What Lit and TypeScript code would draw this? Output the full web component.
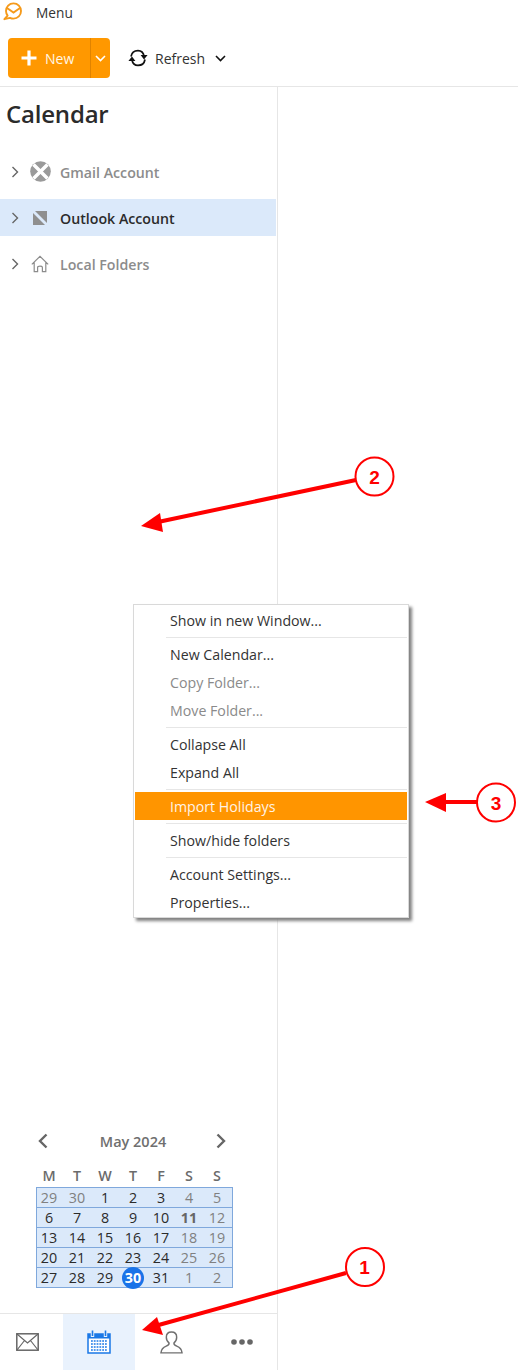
import { LitElement, html, css, svg } from "lit";
import { customElement } from "lit/decorators.js";

const chevronRight = svg`<svg class="chev" width="8" height="12" viewBox="0 0 8 12"><path d="M1.5 1 L6.5 6 L1.5 11" fill="none" stroke="#666" stroke-width="1.4"/></svg>`;

const weeks: [string, boolean?, boolean?][][] = [
  [["29", true], ["30", true], ["1"], ["2"], ["3"], ["4", true], ["5", true]],
  [["6"], ["7"], ["8"], ["9"], ["10"], ["11", true, true], ["12", true]],
  [["13"], ["14"], ["15"], ["16"], ["17"], ["18", true], ["19", true]],
  [["20"], ["21"], ["22"], ["23"], ["24"], ["25", true], ["26", true]],
  [["27"], ["28"], ["29"], ["30"], ["31"], ["1", true], ["2", true]],
];

const menu: (string | null | { t: string; cls: string })[] = [
  "Show in new Window...",
  null,
  "New Calendar...",
  { t: "Copy Folder...", cls: "off" },
  { t: "Move Folder...", cls: "off" },
  null,
  "Collapse All",
  "Expand All",
  null,
  { t: "Import Holidays", cls: "hot" },
  null,
  "Show/hide folders",
  null,
  "Account Settings...",
  "Properties...",
];

@customElement("app-root")
export class AppRoot extends LitElement {
  static styles = css`
    :host {
      display: block;
      position: relative;
      width: 518px;
      height: 1370px;
      overflow: hidden;
      background: #fff;
      font-family: "Open Sans", "Liberation Sans", sans-serif;
      font-size: 14px;
      color: #222;
    }
    .page { display: flex; flex-direction: column; height: 1370px; }
    .menubar { display: flex; align-items: center; height: 24px; padding-left: 3px; }
    .menubar span { margin-left: 11px; font-size: 13.7px; color: #333; }
    .toolbar {
      display: flex; align-items: flex-start; padding: 14px 0 0 8px; box-sizing: border-box;
      height: 63px; border-bottom: 1px solid #e6e6e6;
    }
    .new {
      display: flex; width: 102px; height: 40px; border-radius: 4px; background: #ff9800; color: #fff;
      overflow: hidden;
    }
    .new-main { width: 82px; display: flex; align-items: center; padding-left: 13px; box-sizing: border-box; gap: 8px; font-size: 14px; color: #fff6e6; }
    .new-drop { flex: 1; border-left: 1px solid #e08300; display: flex; align-items: center; justify-content: center; }
    .refresh { display: flex; align-items: center; height: 40px; margin-left: 18px; font-size: 14px; color: #333; }
    .refresh .label { margin: 0 10px 0 7px; }
    .body { flex: 1; display: flex; min-height: 0; }
    .side {
      width: 278px; box-sizing: border-box; border-right: 1px solid #e6e6e6;
      display: flex; flex-direction: column;
    }
    h1 { margin: 0; padding: 9px 0 0 6px; height: 56px; box-sizing: border-box; font-size: 24px; line-height: 36px; font-weight: 600; color: #2b2b2b; letter-spacing: -0.2px; }
    .tree { display: flex; flex-direction: column; gap: 9px; padding-top: 10px; }
    .row {
      display: flex; align-items: center; height: 37px; width: 276px; padding-left: 11px; box-sizing: border-box;
      font-weight: 600; font-size: 14.2px; color: #8c8c8c;
    }
    .row .name { padding-top: 2px; }
    .row.sel { background: #dbe9fa; color: #2b2b2b; }
    .row .ic { width: 22px; height: 22px; margin-left: 10px; margin-right: 9px; display: flex; align-items: center; justify-content: center; }
    .spacer { flex: 1; }
    .cal { padding-left: 36px; width: 197px; box-sizing: content-box; margin-bottom: 25px; }
    .cal-head { display: flex; align-items: center; justify-content: space-between; height: 24px; padding: 0 7px 0 1px; width: 190px; box-sizing: content-box; }
    .cal-head span { font-weight: 600; font-size: 14.5px; color: #6f6f6f; margin-left: 2px; }
    .wd, .wk { display: grid; grid-template-columns: repeat(7, 24px); column-gap: 4px; padding-left: 1px; text-align: center; }
    .wd { margin-top: 12px; height: 22px; line-height: 22px; font-weight: 600; font-size: 14.3px; color: #6b6b6b; }
    .grid { border: 1px solid #7fa8dc; background: #dbe9fa; width: 197px; box-sizing: border-box; }
    .wk { height: 20px; line-height: 19px; box-sizing: border-box; border-bottom: 1px solid #7fa8dc; padding-left: 0; font-size: 14.3px; color: #2b2b2b; }
    .wk:last-child { border-bottom: 0; height: 19px; }
    .wk .m { color: #808080; }
    .wk .b { font-weight: 700; color: #666; }
    .wk .today { position: relative; z-index: 1; font-weight: 700; color: #fff; }
    .wk .today::before {
      content: ""; position: absolute; z-index: -1; left: 1px; top: -1px; width: 22px; height: 22px; border-radius: 50%; background: #1a73e8;
    }
    .tabs { display: grid; grid-template-columns: 54px 72px 72px 1fr; padding-left: 9px; height: 57px; border-top: 1px solid #e6e6e6; box-sizing: border-box; }
    .tab { display: flex; align-items: center; justify-content: center; }
    .tab.first { padding-right: 18px; }
    .tab.on { background: #e9f2fd; }
    .ctx {
      position: absolute; left: 133px; top: 604px; width: 276px; height: 314px; box-sizing: border-box;
      background: #fff; border: 1px solid #d9d9d9; box-shadow: 3px 3px 3px #808080; padding: 1px;
    }
    .ctx .it { height: 28px; line-height: 29px; padding-left: 35px; font-size: 14.2px; color: #333; }
    .ctx .off { color: #8a8a8a; }
    .ctx .hot { background: #ff9500; color: #fff3e6; }
    .ctx .sep { height: 1px; margin: 3px 0 2px 31px; background: #e6e6e6; }
    .notes { position: absolute; left: 0; top: 0; pointer-events: none; }
    .notes text { font-family: "Liberation Sans", sans-serif; font-weight: 700; font-size: 19px; fill: #f00; text-anchor: middle; }
  `;

  render() {
    return html`
      <div class="page">
        <div class="menubar">
          <svg width="22" height="22" viewBox="0 0 22 22">
            <path d="M4.6 14.6 C3.6 13.2 3 11.8 3 10 C3 5.6 6.2 2.4 10.5 2.4 C14.8 2.4 18 5.6 18 10 C18 14.4 14.8 17.6 10.5 17.6 C9.2 17.6 8 17.3 7 16.8 L1.4 18.2 Z" fill="none" stroke="#f59a1b" stroke-width="1.9" stroke-linejoin="round"/>
            <path d="M4 7 L10.5 11.5 L17 7" fill="none" stroke="#f59a1b" stroke-width="1.9"/>
          </svg>
          <span>Menu</span>
        </div>
        <div class="toolbar">
          <div class="new">
            <div class="new-main">
              <svg width="16" height="16" viewBox="0 0 16 16"><path d="M8 0.5 V15.5 M0.5 8 H15.5" stroke="#fff" stroke-width="3.2"/></svg>
              New
            </div>
            <div class="new-drop">
              <svg width="11" height="7" viewBox="0 0 11 7"><path d="M1 1 L5.5 5.5 L10 1" fill="none" stroke="#fff" stroke-width="1.6"/></svg>
            </div>
          </div>
          <div class="refresh">
            <svg width="20" height="18" viewBox="0 0 20 18">
              <path d="M3 7.5 C3.6 4 6.4 1.6 10 1.6 C13 1.6 15.4 3.6 16 7" fill="none" stroke="#111" stroke-width="1.7"/>
              <path d="M17 10.5 C16.4 14 13.6 16.4 10 16.4 C7 16.4 4.6 14.4 4 11" fill="none" stroke="#111" stroke-width="1.7"/>
              <path d="M12.6 6 H19.6 L16 10.6 Z M0.4 12 H7.4 L4 7.4 Z" fill="#111"/>
            </svg>
            <span class="label">Refresh</span>
            <svg width="11" height="7" viewBox="0 0 11 7"><path d="M1 1 L5.5 5.5 L10 1" fill="none" stroke="#111" stroke-width="1.6"/></svg>
          </div>
        </div>
        <div class="body">
          <div class="side">
            <h1>Calendar</h1>
            <div class="tree">
              <div class="row">
                ${chevronRight}
                <div class="ic">
                  <svg width="21" height="21" viewBox="0 0 21 21">
                    <circle cx="10.5" cy="10.5" r="10.3" fill="#9a9a9a"/>
                    <path d="M3.5 3.5 L17.5 17.5 M17.5 3.5 L3.5 17.5" stroke="#fff" stroke-width="3.4"/>
                  </svg>
                </div>
                <span class="name">Gmail Account</span>
              </div>
              <div class="row sel">
                ${chevronRight}
                <div class="ic">
                  <svg width="14" height="14" viewBox="0 0 14 14">
                    <rect width="14" height="14" fill="#8f8f8f"/>
                    <path d="M0 0 L14 14" stroke="#dbe9fa" stroke-width="2.8"/>
                  </svg>
                </div>
                <span class="name">Outlook Account</span>
              </div>
              <div class="row">
                ${chevronRight}
                <div class="ic">
                  <svg width="18" height="18" viewBox="0 0 18 18">
                    <path d="M0.8 9.4 L9 1.4 L17.2 9.4 M3.2 7.5 V16.6 H6.6 V12.4 C6.6 10.6 11.4 10.6 11.4 12.4 V16.6 H14.8 V7.5" fill="none" stroke="#8c8c8c" stroke-width="1.2"/>
                  </svg>
                </div>
                <span class="name">Local Folders</span>
              </div>
            </div>
            <div class="spacer"></div>
            <div class="cal">
              <div class="cal-head">
                <svg width="12" height="16" viewBox="0 0 12 16"><path d="M9.5 1.5 L3 8 L9.5 14.5" fill="none" stroke="#666" stroke-width="2.4"/></svg>
                <span>May 2024</span>
                <svg width="12" height="16" viewBox="0 0 12 16"><path d="M2.5 1.5 L9 8 L2.5 14.5" fill="none" stroke="#666" stroke-width="2.4"/></svg>
              </div>
              <div class="wd">${["M", "T", "W", "T", "F", "S", "S"].map((d) => html`<span>${d}</span>`)}</div>
              <div class="grid">
                ${weeks.map(
                  (w, i) => html`<div class="wk">
                    ${w.map(
                      ([d, m, b], j) =>
                        html`<span class="${i === 4 && j === 3 ? "today" : b ? "b" : m ? "m" : ""}">${d}</span>`
                    )}
                  </div>`
                )}
              </div>
            </div>
            <div class="tabs">
              <div class="tab first">
                <svg width="23" height="18" viewBox="0 0 23 18">
                  <rect x="0.8" y="0.8" width="21.4" height="16.4" fill="none" stroke="#666" stroke-width="1.5"/>
                  <path d="M1 1 L11.5 10 L22 1 M1 17 L8.5 7.5 M22 17 L14.5 7.5" fill="none" stroke="#666" stroke-width="1.2"/>
                </svg>
              </div>
              <div class="tab on">
                <svg width="24" height="24" viewBox="0 0 24 24">
                  <path d="M1 4 H23 V23 H1 Z" fill="#fff" stroke="#1a78e6" stroke-width="1.5"/>
                  <rect x="1" y="4" width="22" height="4.500" fill="#1a78e6"/>
                  <path d="M5.5 1 V7 M18.500 1 V7" stroke="#e9f2fd" stroke-width="3.4"/>
                  <path d="M5.5 0.5 V6 M18.5 0.5 V6" stroke="#1a78e6" stroke-width="1.6"/>
                  <path d="M4 11 H20 M4 14 H20 M4 17 H20 M4 20 H20" stroke="#1a78e6" stroke-width="1.6" stroke-dasharray="1.8 1"/>
                </svg>
              </div>
              <div class="tab">
                <svg width="23" height="23" viewBox="0 0 24 24">
                  <path d="M6.6 6.5 C6.6 3 9 1 12 1 C15 1 17.4 3 17.4 6.5 C17.4 9.2 16 11.4 14.6 12.4 C14.2 13.8 15 14.800 17.500 15.800 C20.500 17 22.600 18.500 23 22.800 H1 C1.400 18.500 3.500 17 6.500 15.800 C9 14.800 9.800 13.800 9.400 12.400 C8 11.400 6.600 9.200 6.600 6.500 Z" fill="none" stroke="#707070" stroke-width="1.500"/>
                </svg>
              </div>
              <div class="tab">
                <svg width="22" height="6" viewBox="0 0 22 6"><circle cx="3" cy="3" r="2.8" fill="#666"/><circle cx="11" cy="3" r="2.8" fill="#666"/><circle cx="19" cy="3" r="2.8" fill="#666"/></svg>
              </div>
            </div>
          </div>
        </div>
      </div>

      <div class="ctx">
        ${menu.map((m) =>
          m === null
            ? html`<div class="sep"></div>`
            : typeof m === "string"
            ? html`<div class="it">${m}</div>`
            : html`<div class="it ${m.cls}">${m.t}</div>`
        )}
      </div>

      <svg class="notes" width="518" height="1370" viewBox="0 0 518 1370">
        <g stroke="#f00" fill="none">
          <path d="M346 1273 L155 1326" stroke-width="4"/>
          <path d="M356 480 L158 522" stroke-width="4"/>
          <path d="M477 802 L444 802" stroke-width="4"/>
          <circle cx="365" cy="1267" r="19" fill="#fff" stroke-width="2"/>
          <circle cx="374.500" cy="476.500" r="19" fill="#fff" stroke-width="2"/>
          <circle cx="496" cy="802.500" r="19" fill="#fff" stroke-width="2"/>
        </g>
        <path d="M142 1330 L157 1317 L163 1335 Z" fill="#f00"/>
        <path d="M141 526 L160 513 L163 532 Z" fill="#f00"/>
        <path d="M425 802 L446 793 L446 812 Z" fill="#f00"/>
        <text x="364.500" y="1274">1</text>
        <text x="374.500" y="483.500">2</text>
        <text x="496" y="809.500">3</text>
      </svg>
    `;
  }
}
